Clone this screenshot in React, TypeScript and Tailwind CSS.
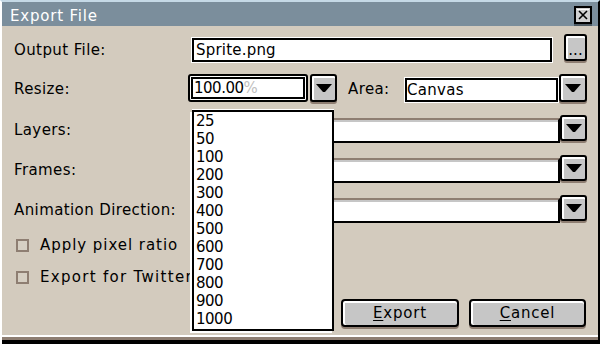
import React from "react";

function Arrow() {
  return (
    <svg width="16" height="8" viewBox="0 0 16 8">
      <polygon points="0,0 16,0 9,8 7,8" fill="#000" />
    </svg>
  );
}

function DropBtn({ className }: { className: string }) {
  return (
    <div
      className={
        "shrink-0 rounded-[3px] border-2 border-black bg-[#c6c6c6] shadow-[inset_0_2px_0_#fff,inset_2px_0_0_#fff,0_2px_0_#8e7e72] flex items-center justify-center " +
        className
      }
    >
      <Arrow />
    </div>
  );
}

function Combo() {
  return (
    <div className="ml-[2px] w-[370px] h-[25px] self-end border-t-2 border-t-[#8e7e72] border-b-2 border-b-black border-r-2 border-r-black bg-white shadow-[inset_0_2px_0_#c6c6c6]" />
  );
}

export default function App() {
  const items = ["25", "50", "100", "200", "300", "400", "500", "600", "700", "800", "900", "1000"];
  return (
    <div className="w-[600px] h-[344px] flex flex-col bg-[#d3cbbe] border-t-2 border-l-2 border-r-2 border-t-[#c5d9e6] border-l-white border-r-black relative overflow-hidden font-['DejaVu_Sans',sans-serif] text-[15px] leading-[18px] tracking-[0.4px] text-black">
      {/* Title bar */}
      <div className="h-[24px] shrink-0 bg-[#7b8e9c] flex items-start pl-[8px] pr-[6px]">
        <div className="mt-[5px] text-white tracking-[0.8px]">Export File</div>
        <div className="ml-auto mt-[4px]">
          <svg width="18" height="20" viewBox="0 0 18 20">
            <rect x="0" y="17" width="18" height="3" fill="#4e5a62" />
            <rect x="1" y="1" width="16" height="16" fill="#d0d0d0" stroke="#000" strokeWidth="2" />
            <rect x="3" y="3" width="12" height="1" fill="#fff" />
            <path d="M5 5 L13 13 M13 5 L5 13" stroke="#000" strokeWidth="1.6" />
          </svg>
        </div>
      </div>

      {/* Body */}
      <div className="flex-1 flex flex-col pl-[12px] pr-[11px]">
        {/* Output File */}
        <div className="mt-[8px] h-[29px] flex items-start">
          <div className="w-[174px] shrink-0 self-center pt-[2px]">Output File:</div>
          <div className="ml-[4px] mt-[4px] w-[360px] h-[24px] border-2 border-black bg-white shadow-[0_0_0_1px_#fff] flex items-center pl-[2px] tracking-[0.2px]">
            Sprite.png
          </div>
          <div className="ml-[12px] w-[23px] h-[27px] shrink-0 rounded-[3px] border-2 border-black bg-[#c6c6c6] shadow-[inset_0_2px_0_#fff,inset_2px_0_0_#fff,0_2px_0_#8e7e72] flex items-end justify-center pb-[4px] leading-[10px] tracking-[0px]">
            ...
          </div>
        </div>

        {/* Resize / Area */}
        <div className="mt-[11px] h-[28px] flex items-center">
          <div className="w-[174px] shrink-0 pt-[1px]">Resize:</div>
          <div className="w-[120px] h-[28px] shrink-0 rounded-[3px] border-2 border-black bg-white p-[1px]">
            <div className="h-full border-2 border-black bg-white flex items-center pl-[1px] tracking-[-0.5px]">
              100.00<span className="text-[#c0c0c0]">%</span>
            </div>
          </div>
          <DropBtn className="ml-[2px] w-[27px] h-[28px]" />
          <div className="ml-[11px] w-[57px] shrink-0 pt-[1px]">Area:</div>
          <div className="w-[153px] h-[24px] self-end shrink-0 border-2 border-black bg-white shadow-[0_0_0_1px_#fff] flex items-center tracking-[0.3px]">
            Canvas
          </div>
          <DropBtn className="ml-[1px] w-[28px] h-[28px]" />
        </div>

        {/* Layers */}
        <div className="mt-[13px] h-[28px] flex items-center">
          <div className="w-[174px] shrink-0 pt-[1px]">Layers:</div>
          <Combo />
          <DropBtn className="w-[27px] h-[26px] self-start" />
        </div>

        {/* Frames */}
        <div className="mt-[12px] h-[28px] flex items-center">
          <div className="w-[174px] shrink-0 pt-[1px]">Frames:</div>
          <Combo />
          <DropBtn className="w-[27px] h-[26px] self-start" />
        </div>

        {/* Animation Direction */}
        <div className="mt-[12px] h-[28px] flex items-center">
          <div className="w-[174px] shrink-0 pt-[1px]">Animation Direction:</div>
          <Combo />
          <DropBtn className="w-[27px] h-[26px] self-start" />
        </div>

        {/* Checkboxes */}
        <div className="mt-[13px] h-[18px] flex items-center">
          <div className="ml-[2px] w-[13px] h-[13px] shrink-0 border-2 border-[#8e7e72] bg-[#d6cfc3]" />
          <div className="ml-[11px] whitespace-nowrap tracking-[0.95px]">Apply pixel ratio</div>
        </div>
        <div className="mt-[14px] h-[18px] flex items-center">
          <div className="ml-[2px] w-[13px] h-[13px] shrink-0 border-2 border-[#8e7e72] bg-[#d6cfc3]" />
          <div className="ml-[11px] whitespace-nowrap tracking-[1.3px]">Export for Twitter</div>
        </div>

        {/* Buttons */}
        <div className="mt-[13px] flex justify-end gap-[10px] pr-[1px]">
          <div className="w-[118px] h-[28px] rounded-[4px] border-2 border-black bg-[#c6c6c6] shadow-[inset_0_2px_0_#fff,inset_2px_0_0_#fff,0_2px_0_#8e7e72] flex items-center justify-center tracking-[0.8px]">
            <span>
              <span className="underline underline-offset-2">E</span>xport
            </span>
          </div>
          <div className="w-[117px] h-[28px] rounded-[4px] border-2 border-black bg-[#c6c6c6] shadow-[inset_0_2px_0_#fff,inset_2px_0_0_#fff,0_2px_0_#8e7e72] flex items-center justify-center tracking-[0.8px]">
            <span>
              <span className="underline underline-offset-2">C</span>ancel
            </span>
          </div>
        </div>
      </div>

      {/* Bottom frame */}
      <div className="h-[2px] shrink-0 bg-white" />
      <div className="h-[3px] shrink-0 bg-[#8e7e72]" />
      <div className="h-[4px] shrink-0 bg-black" />

      {/* Dropdown list */}
      <div className="absolute left-[190px] top-[108px] w-[142px] h-[221px] border-2 border-black bg-white shadow-[-2px_2px_0_#fff,0_-1px_0_#fff] flex flex-col tracking-[-0.5px]">
        {items.map((it) => (
          <div key={it} className="h-[18px] leading-[18px] pl-[2px]">
            {it}
          </div>
        ))}
      </div>
    </div>
  );
}
